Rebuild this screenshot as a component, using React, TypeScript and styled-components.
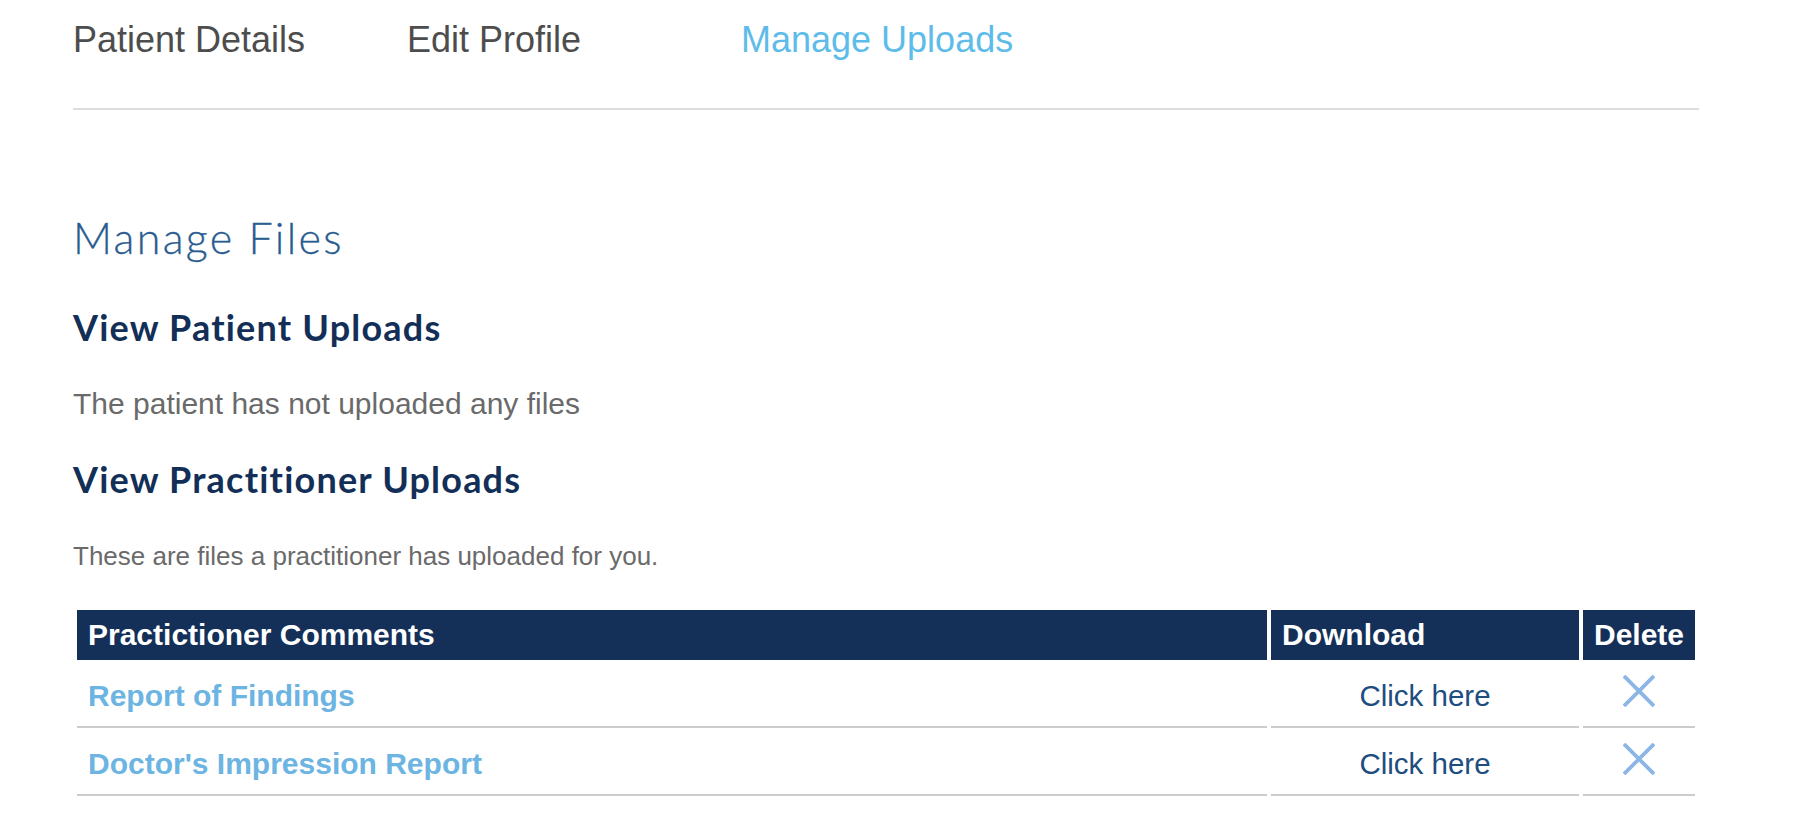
import React from "react";
import styled, { createGlobalStyle } from "styled-components";

const GlobalStyle = createGlobalStyle`
  html, body {
    margin: 0;
    padding: 0;
    background: #ffffff;
  }
  body {
    font-family: "Liberation Sans", Arial, Helvetica, sans-serif;
  }
  * { box-sizing: border-box; }
`;

const Page = styled.div`
  padding-left: 73px;
  width: 1699px;
`;

const Tabs = styled.nav`
  display: flex;
  padding-top: 20px;
  padding-bottom: 48px;
  border-bottom: 2px solid #dddddd;
`;

const Tab = styled.a<{ $active?: boolean }>`
  display: block;
  width: 334px;
  font-family: "Liberation Sans", Arial, sans-serif;
  font-size: 36px;
  line-height: 40px;
  color: ${(p) => (p.$active ? "#5dbce9" : "#4d4d4d")};
  text-decoration: none;
  cursor: pointer;
`;

const Section = styled.section`
  display: flex;
  flex-direction: column;
`;

const Title = styled.h1`
  margin: 104px 0 0;
  font-family: Lato, "Open Sans", sans-serif;
  font-weight: 300;
  font-size: 43px;
  letter-spacing: 2.3px;
  line-height: 48px;
  color: #2a5c90;
  -webkit-text-stroke: 0.3px #2a5c90;
`;

const SubHeading = styled.h2<{ $gap: number }>`
  margin: ${(p) => p.$gap}px 0 0;
  font-family: Lato, "Open Sans", sans-serif;
  font-weight: 700;
  font-size: 36px;
  letter-spacing: 1.2px;
  line-height: 42px;
  color: #132f58;
`;

const Text = styled.p<{ $size: number; $gap: number }>`
  margin: ${(p) => p.$gap}px 0 0;
  font-family: "Liberation Sans", Arial, sans-serif;
  font-size: ${(p) => p.$size}px;
  line-height: ${(p) => p.$size + (p.$size > 28 ? 6 : 4)}px;
  color: #6a6a6a;
`;

const Table = styled.table`
  margin-top: 39px;
  width: 1626px;
  border-collapse: separate;
  border-spacing: 4px 0;
  font-family: "Liberation Sans", Arial, sans-serif;
  font-size: 30px;
`;

const HeadCell = styled.th<{ $width?: number }>`
  width: ${(p) => (p.$width ? `${p.$width}px` : "auto")};
  background: #143058;
  color: #ffffff;
  font-size: 30px;
  font-weight: 700;
  line-height: 50px;
  text-align: left;
  padding: 0 10px 0 11px;
  white-space: nowrap;
`;

const Cell = styled.td<{ $align?: "left" | "center" }>`
  padding: 21px 11px 15px;
  font-size: 30px;
  line-height: 30px;
  border-bottom: 2px solid #cccccc;
  text-align: ${(p) => p.$align ?? "left"};
  vertical-align: top;
`;

const IconCell = styled.td`
  padding: 15px 0 19px;
  border-bottom: 2px solid #cccccc;
  vertical-align: top;
`;

const FileLink = styled.a`
  font-weight: 700;
  color: #6cb4e2;
  text-decoration: none;
  cursor: pointer;
`;

const DownloadLink = styled.a`
  font-size: 29.5px;
  color: #1e4d80;
  text-decoration: none;
  cursor: pointer;
`;

const DeleteButton = styled.button`
  display: block;
  margin: 0 auto;
  padding: 0;
  width: 32px;
  height: 32px;
  border: 0;
  background: transparent;
  cursor: pointer;
  svg { display: block; }
`;

const CloseIcon = () => (
  <svg width="32" height="32" viewBox="0 0 32 32" fill="none">
    <path d="M1 1 L31 31 M31 1 L1 31" stroke="#8cb6e6" strokeWidth="3.8" />
  </svg>
);

const files = ["Report of Findings", "Doctor's Impression Report"];

export default function App() {
  return (
    <>
      <GlobalStyle />
      <Page>
        <Tabs>
          <Tab>Patient Details</Tab>
          <Tab>Edit Profile</Tab>
          <Tab $active>Manage Uploads</Tab>
        </Tabs>
        <Section>
          <Title>Manage Files</Title>
          <SubHeading $gap={44}>View Patient Uploads</SubHeading>
          <Text $size={30} $gap={38}>The patient has not uploaded any files</Text>
          <SubHeading $gap={36}>View Practitioner Uploads</SubHeading>
          <Text $size={26} $gap={41}>These are files a practitioner has uploaded for you.</Text>
          <Table>
            <thead>
              <tr>
                <HeadCell>Practictioner Comments</HeadCell>
                <HeadCell $width={308}>Download</HeadCell>
                <HeadCell $width={112}>Delete</HeadCell>
              </tr>
            </thead>
            <tbody>
              {files.map((f) => (
                <tr key={f}>
                  <Cell>
                    <FileLink>{f}</FileLink>
                  </Cell>
                  <Cell $align="center">
                    <DownloadLink>Click here</DownloadLink>
                  </Cell>
                  <IconCell>
                    <DeleteButton aria-label="Delete">
                      <CloseIcon />
                    </DeleteButton>
                  </IconCell>
                </tr>
              ))}
            </tbody>
          </Table>
        </Section>
      </Page>
    </>
  );
}
